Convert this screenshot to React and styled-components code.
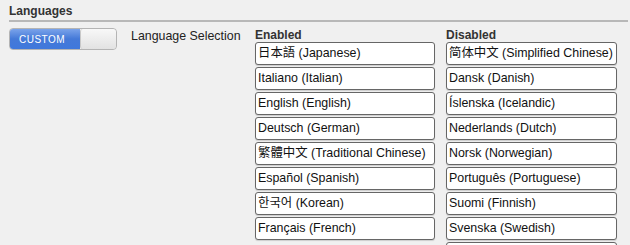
import React from 'react';
import styled, { createGlobalStyle } from 'styled-components';

const GlobalStyle = createGlobalStyle`
  html, body {
    margin: 0;
    padding: 0;
    background: #f0f0f0;
    font-family: "Liberation Sans", Arial, "Noto Sans CJK SC", sans-serif;
    color: #111;
  }
`;

const Page = styled.div`
  width: 630px;
  height: 245px;
  overflow: hidden;
  padding: 4px 2px 0 9px;
  box-sizing: border-box;
`;

const Heading = styled.h2`
  margin: 0;
  font-size: 12px;
  font-weight: bold;
  color: #333;
  padding-bottom: 2px;
  border-bottom: 2px solid #b8b8b8;
`;

const Body = styled.div`
  display: flex;
  align-items: flex-start;
  padding-top: 6px;
`;

const Toggle = styled.div`
  display: flex;
  width: 108px;
  height: 22px;
  border-radius: 4px;
  overflow: hidden;
  border: 1px solid #b4b4b4;
  box-sizing: border-box;
  flex-shrink: 0;
`;

const ToggleOn = styled.div`
  width: 70px;
  background: linear-gradient(#7aa3ea, #4479d8 50%, #3f78dc);
  color: #fff;
  font-size: 10px;
  letter-spacing: 0.5px;
  display: flex;
  align-items: center;
  padding-left: 9px;
  box-sizing: border-box;
`;

const ToggleOff = styled.div`
  flex: 1;
  background: linear-gradient(#f8f8f8, #e2e2e2);
  border-left: 1px solid #c8c8c8;
  border-radius: 3px;
`;

const FieldLabel = styled.div`
  font-size: 12.4px;
  color: #222;
  margin: 1px 0 0 14px;
  width: 124px;
  flex-shrink: 0;
`;

const Column = styled.div`
  display: flex;
  flex-direction: column;
  width: ${p => p.$width}px;
  margin-right: ${p => p.$gap}px;
`;

const ColumnTitle = styled.div`
  font-size: 12px;
  font-weight: bold;
  color: #333;
  height: 14px;
  line-height: 14px;
`;

const Item = styled.div`
  height: 23px;
  margin-bottom: 2px;
  background: #fff;
  border: 1px solid #666;
  border-radius: 3px;
  box-sizing: border-box;
  box-shadow: 0 1px 1px rgba(0, 0, 0, 0.15);
  font-size: 12.4px;
  line-height: 21px;
  padding-left: 2px;
  white-space: nowrap;
  color: #111;
`;

const enabled = [
  '日本語 (Japanese)',
  'Italiano (Italian)',
  'English (English)',
  'Deutsch (German)',
  '繁體中文 (Traditional Chinese)',
  'Español (Spanish)',
  '한국어 (Korean)',
  'Français (French)',
];

const disabled = [
  '简体中文 (Simplified Chinese)',
  'Dansk (Danish)',
  'Íslenska (Icelandic)',
  'Nederlands (Dutch)',
  'Norsk (Norwegian)',
  'Português (Portuguese)',
  'Suomi (Finnish)',
  'Svenska (Swedish)',
  'Türkçe (Turkish)',
];

export default function App() {
  return (
    <Page>
      <GlobalStyle />
      <Heading>Languages</Heading>
      <Body>
        <Toggle>
          <ToggleOn>CUSTOM</ToggleOn>
          <ToggleOff />
        </Toggle>
        <FieldLabel>Language Selection</FieldLabel>
        <Column $width={180} $gap={11}>
          <ColumnTitle>Enabled</ColumnTitle>
          {enabled.map(l => <Item key={l}>{l}</Item>)}
        </Column>
        <Column $width={171} $gap={0}>
          <ColumnTitle>Disabled</ColumnTitle>
          {disabled.map(l => <Item key={l}>{l}</Item>)}
        </Column>
      </Body>
    </Page>
  );
}
